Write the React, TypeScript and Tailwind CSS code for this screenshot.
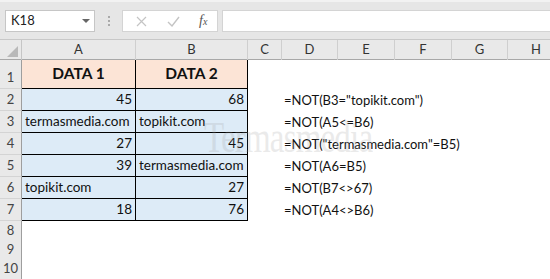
const cols = ['A', 'B', 'C', 'D', 'E', 'F', 'G', 'H'];

interface Row {
  n: number;
  a?: string;
  b?: string;
  aNum?: boolean;
  bNum?: boolean;
  f?: string;
}

const rows: Row[] = [
  { n: 2, a: '45', b: '68', aNum: true, bNum: true, f: '=NOT(B3="topikit.com")' },
  { n: 3, a: 'termasmedia.com', b: 'topikit.com', f: '=NOT(A5<=B6)' },
  { n: 4, a: '27', b: '45', aNum: true, bNum: true, f: '=NOT("termasmedia.com"=B5)' },
  { n: 5, a: '39', b: 'termasmedia.com', aNum: true, f: '=NOT(A6=B5)' },
  { n: 6, a: 'topikit.com', b: '27', bNum: true, f: '=NOT(B7<>67)' },
  { n: 7, a: '18', b: '76', aNum: true, bNum: true, f: '=NOT(A4<>B6)' },
];

const grid = 'grid grid-cols-[22px_114px_112px_34px_56px_57px_57px_56px_57px]';
const cell = 'bg-[#ddebf7] [border-right:1px_solid_#000] [border-bottom:1px_solid_#000] flex items-end pb-[1px] px-[3px] whitespace-nowrap';

function RowHead({ n }: { n?: number }) {
  return (
    <div className="flex items-end justify-center pb-[1px] bg-[#e9e9e9] [border-right:1px_solid_#9e9e9e] [border-bottom:1px_solid_#d4d4d4] text-[#444] text-[13px]">
      {n}
    </div>
  );
}

export default function App() {
  return (
    <div
      className="relative w-[550px] h-[279px] overflow-hidden bg-white"
      style={{ fontFamily: 'Lato, "Open Sans", sans-serif' }}
    >
      {/* formula bar */}
      <div className="h-[40px] bg-[#e6e6e6] border-t-2 border-t-[#f2f2f2] border-b border-b-[#c8c8c8] flex items-start pt-[8px]">
        <div className="ml-[5px] w-[90px] h-[22px] bg-white border border-[#c6c6c6] flex items-center justify-between pl-[5px] pr-[4px] text-[13px] text-[#222]">
          <span>K18</span>
          <svg width="8" height="5" viewBox="0 0 8 5">
            <path d="M0 0 L8 0 L4 4 Z" fill="#666" />
          </svg>
        </div>
        <div className="w-[27px] h-[22px] flex flex-col items-center justify-center gap-[2px]">
          <span className="w-[2px] h-[2px] bg-[#aaa]" />
          <span className="w-[2px] h-[2px] bg-[#aaa]" />
          <span className="w-[2px] h-[2px] bg-[#aaa]" />
        </div>
        <div className="w-[96px] h-[22px] bg-white border border-[#d4d4d4] flex items-center">
          <svg className="ml-[13px]" width="11" height="11" viewBox="0 0 11 11">
            <path d="M1 1 L10 10 M10 1 L1 10" stroke="#c4c4c4" strokeWidth="1.2" />
          </svg>
          <svg className="ml-[20px]" width="13" height="11" viewBox="0 0 13 11">
            <path d="M1 6 L5 10 L12 1" stroke="#c4c4c4" strokeWidth="1.4" fill="none" />
          </svg>
          <span
            className="ml-[19px] text-[14px] italic text-[#555] leading-none"
            style={{ fontFamily: '"Liberation Serif", serif' }}
          >
            f<span className="text-[10px]">x</span>
          </span>
        </div>
        <div className="ml-[4px] flex-1 h-[22px] bg-white border border-[#d4d4d4] border-r-0" />
      </div>

      {/* column headers */}
      <div className={`${grid} h-[20px] bg-[#e9e9e9] [border-bottom:1px_solid_#a8a8a8]`}>
        <div className="relative [border-right:1px_solid_#c6c6c6]">
          <svg className="absolute right-[3px] bottom-[3px]" width="11" height="11" viewBox="0 0 11 11">
            <path d="M11 0 L11 11 L0 11 Z" fill="#b9b9b9" />
          </svg>
        </div>
        {cols.map((c) => (
          <div
            key={c}
            className="flex items-center justify-center text-[13px] text-[#333] [border-right:1px_solid_#cfcfcf]"
          >
            {c}
          </div>
        ))}
        <div />
      </div>

      {/* row 1 */}
      <div className={`${grid} h-[29px]`}>
        <RowHead n={1} />
        <div className="bg-[#fce4d6] [border-right:1px_solid_#000] [border-bottom:1px_solid_#000] flex items-center justify-center font-bold text-[15.5px] text-[#111]">
          DATA 1
        </div>
        <div className="bg-[#fce4d6] [border-right:1px_solid_#000] [border-bottom:1px_solid_#000] flex items-center justify-center font-bold text-[15.5px] text-[#111]">
          DATA 2
        </div>
      </div>

      {rows.map((r) => (
        <div key={r.n} className={`${grid} h-[22px] text-[13.5px] text-[#111]`}>
          <RowHead n={r.n} />
          <div className={`${cell} ${r.aNum ? 'justify-end' : 'justify-start'}`}>{r.a}</div>
          <div className={`${cell} ${r.bNum ? 'justify-end' : 'justify-start'}`}>{r.b}</div>
          <div />
          <div className="flex items-end pb-[1px] pl-[2px] whitespace-nowrap text-[13px]">{r.f}</div>
        </div>
      ))}

      {[8, 9, 10].map((n) => (
        <div key={n} className={`${grid} h-[19px]`}>
          <RowHead n={n} />
        </div>
      ))}
      <div className={`${grid} h-[19px]`}>
        <RowHead />
      </div>

      {/* watermark */}
      <div
        className="absolute left-[204px] top-[116px] text-[44px] leading-none text-[#9a9a9a] opacity-20 pointer-events-none tracking-tight"
        style={{ fontFamily: '"Liberation Serif", serif', transform: 'scaleX(0.75)', transformOrigin: 'left' }}
      >
        Termasmedia
      </div>
    </div>
  );
}
